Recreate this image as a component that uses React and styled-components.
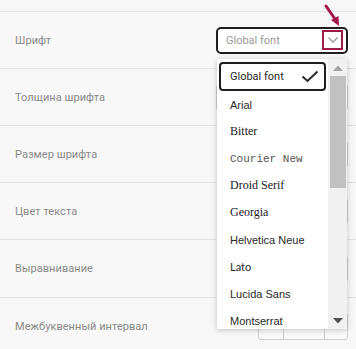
import React from "react";
import styled, { createGlobalStyle } from "styled-components";

const Global = createGlobalStyle`
  html, body { margin: 0; padding: 0; background: #f8f8f8; }
  body { font-family: Roboto, "Liberation Sans", Arial, sans-serif; }
`;

const Page = styled.div`
  position: relative;
  width: 356px;
  height: 349px;
  overflow: hidden;
  padding-top: 11px;
  box-sizing: border-box;
  background: #f8f8f8;
`;

const Row = styled.div`
  height: ${(p) => p.$h || 57}px;
  box-sizing: border-box;
  border-top: 1px solid #e2e2e2;
  display: flex;
  align-items: center;
  justify-content: space-between;
  padding: 0 8px 0 15px;
`;

const Label = styled.span`
  font-size: 11px;
  color: #8a8a8a;
  letter-spacing: 0.05px;
`;

const SelectBox = styled.div`
  width: 132px;
  height: 27px;
  box-sizing: border-box;
  border: 2px solid #1f1f1f;
  border-radius: 5px;
  background: #fff;
  display: flex;
  align-items: center;
  justify-content: space-between;
  padding: 0 3px 0 8px;
`;

const SelectText = styled.span`
  font-size: 11px;
  color: #9a9a9a;
`;

const ChevronBox = styled.div`
  width: 21px;
  height: 20px;
  box-sizing: border-box;
  border: 2px solid #9b1a48;
  display: flex;
  align-items: center;
  justify-content: center;
`;

const Control = styled.div`
  width: ${(p) => p.$w}px;
  height: 27px;
  box-sizing: border-box;
  border: 1px solid #cfcfcf;
  border-radius: 3px;
  background: #fff;
`;

const Segmented = styled.div`
  width: 90px;
  height: 28px;
  box-sizing: border-box;
  border: 1px solid #cfcfcf;
  border-radius: 3px;
  display: grid;
  grid-template-columns: 25px 41px 1fr;
  background: #fafafa;
`;

const Seg = styled.div`
  border-right: ${(p) => (p.$last ? "none" : "1px solid #cfcfcf")};
`;

const Dropdown = styled.div`
  position: absolute;
  left: 217px;
  top: 59px;
  width: 130px;
  height: 270px;
  background: #fff;
  box-shadow: 0 1px 6px rgba(0, 0, 0, 0.22);
  display: flex;
  overflow: hidden;
`;

const List = styled.div`
  flex: 1;
  display: flex;
  flex-direction: column;
  padding: 3px 2px 0 2px;
`;

const Item = styled.div`
  flex: none;
  height: ${(p) => (p.$selected ? 29 : 27)}px;
  box-sizing: border-box;
  display: flex;
  align-items: center;
  justify-content: space-between;
  padding: 0 5px 0 ${(p) => (p.$selected ? 9 : 11)}px;
  border: ${(p) => (p.$selected ? "2px solid #1f1f1f" : "none")};
  border-radius: 4px;
  font-family: ${(p) => p.$font};
  font-size: ${(p) => p.$size || 11}px;
  color: ${(p) => p.$color || "#2a2a2a"};
`;

const Scrollbar = styled.div`
  width: 19px;
  background: #f1f1f1;
  display: flex;
  flex-direction: column;
  align-items: center;
  padding: 0 1px 0 2px;
  box-sizing: border-box;
`;

const ScrollBtn = styled.div`
  height: 17px;
  width: 100%;
  display: flex;
  align-items: center;
  justify-content: center;
`;

const Thumb = styled.div`
  width: 100%;
  height: 112px;
  background: #c1c1c1;
`;

const Spacer = styled.div`
  flex: 1;
`;

const Pointer = styled.svg`
  position: absolute;
  left: 318px;
  top: 0;
`;

const fonts = [
  { name: "Arial", fam: '"Liberation Sans", Arial, sans-serif' },
  { name: "Bitter", fam: '"Liberation Serif", serif', size: 12, color: "#222" },
  { name: "Courier New", fam: '"Liberation Mono", monospace', color: "#555" },
  { name: "Droid Serif", fam: '"Liberation Serif", serif', size: 12, color: "#222" },
  { name: "Georgia", fam: '"Liberation Serif", serif', size: 12, color: "#222" },
  { name: "Helvetica Neue", fam: '"Liberation Sans", sans-serif' },
  { name: "Lato", fam: "Lato, sans-serif" },
  { name: "Lucida Sans", fam: '"Liberation Sans", sans-serif' },
  { name: "Montserrat", fam: '"Liberation Sans", sans-serif' },
];

export default function App() {
  return (
    <>
      <Global />
      <Page>
        <Row>
          <Label>Шрифт</Label>
          <SelectBox>
            <SelectText>Global font</SelectText>
            <ChevronBox>
              <svg width="12" height="8" viewBox="0 0 12 8">
                <path d="M1.5 1.5 L6 6 L10.5 1.5" fill="none" stroke="#a8a8a8" strokeWidth="1.6" />
              </svg>
            </ChevronBox>
          </SelectBox>
        </Row>
        <Row>
          <Label>Толщина шрифта</Label>
          <Control $w={132} />
        </Row>
        <Row>
          <Label>Размер шрифта</Label>
          <Control $w={90} />
        </Row>
        <Row>
          <Label>Цвет текста</Label>
          <Control $w={110} />
        </Row>
        <Row $h={58}>
          <Label>Выравнивание</Label>
          <Control $w={100} />
        </Row>
        <Row>
          <Label>Межбуквенный интервал</Label>
          <Segmented>
            <Seg />
            <Seg />
            <Seg $last />
          </Segmented>
        </Row>

        <Dropdown>
          <List>
            <Item $selected $font="Roboto, sans-serif">
              Global font
              <svg width="18" height="13" viewBox="0 0 18 13">
                <path d="M1.5 6.5 L6.5 11 L16.5 1.5" fill="none" stroke="#2a2a2a" strokeWidth="2" />
              </svg>
            </Item>
            {fonts.map((f) => (
              <Item key={f.name} $font={f.fam} $size={f.size} $color={f.color}>
                {f.name}
              </Item>
            ))}
          </List>
          <Scrollbar>
            <ScrollBtn>
              <svg width="10" height="6" viewBox="0 0 10 6">
                <path d="M0 6 L5 0.5 L10 6 Z" fill="#a3a3a3" />
              </svg>
            </ScrollBtn>
            <Thumb />
            <Spacer />
            <ScrollBtn>
              <svg width="10" height="6" viewBox="0 0 10 6">
                <path d="M0 0 L5 5.5 L10 0 Z" fill="#505050" />
              </svg>
            </ScrollBtn>
          </Scrollbar>
        </Dropdown>

        <Pointer width="26" height="30" viewBox="0 0 26 30">
          <path d="M8 6 L17 19" stroke="#a3164a" strokeWidth="3" strokeLinecap="round" />
          <path d="M13 20 L21 26 L20.5 16 Z" fill="#a3164a" />
        </Pointer>
      </Page>
    </>
  );
}
